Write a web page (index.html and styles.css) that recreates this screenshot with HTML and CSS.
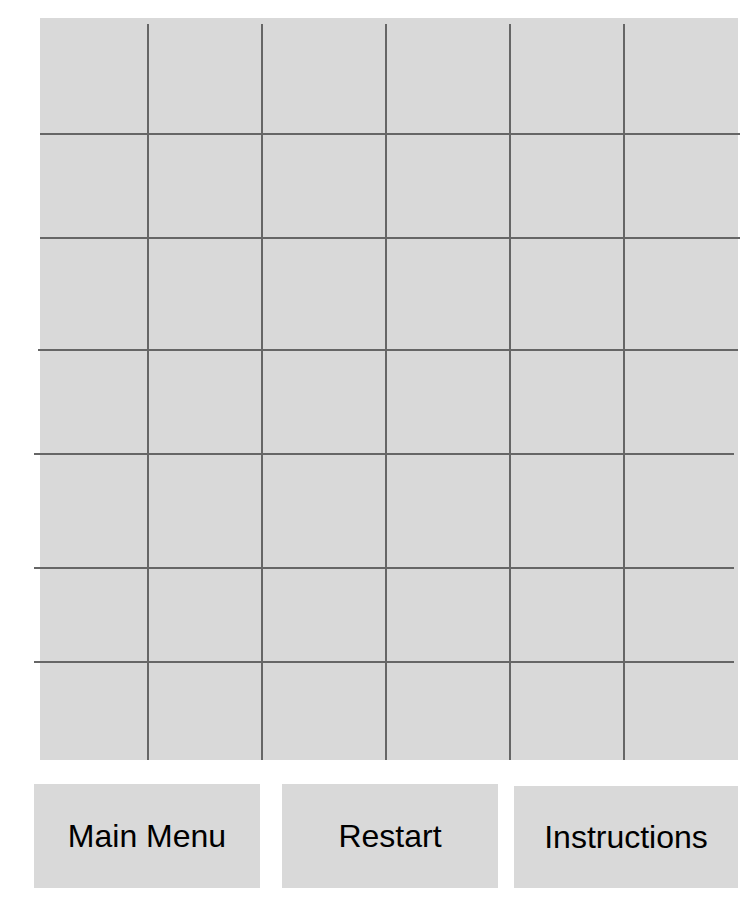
FILE: index.html
```html
<!DOCTYPE html>
<html>
<head>
<meta charset="utf-8">
<title>Board</title>
<link rel="stylesheet" href="styles.css">
</head>
<body>
<div class="board">
  <svg class="board-svg" width="756" height="760" viewBox="0 0 756 760" xmlns="http://www.w3.org/2000/svg">
    <rect x="40" y="18" width="698" height="742" fill="#d9d9d9"/>
    <g fill="#666666">
      <rect x="40" y="133" width="700" height="2"/>
      <rect x="40" y="237" width="700" height="2"/>
      <rect x="38" y="349" width="700" height="2"/>
      <rect x="34" y="453" width="700" height="2"/>
      <rect x="34" y="567" width="700" height="2"/>
      <rect x="34" y="661" width="700" height="2"/>
      <rect x="147" y="24" width="2" height="736"/>
      <rect x="261" y="24" width="2" height="736"/>
      <rect x="385" y="24" width="2" height="736"/>
      <rect x="509" y="24" width="2" height="736"/>
      <rect x="623" y="24" width="2" height="736"/>
    </g>
  </svg>
</div>
<div class="controls">
  <button class="btn btn-menu">Main Menu</button>
  <button class="btn btn-restart">Restart</button>
  <button class="btn btn-help">Instructions</button>
</div>
</body>
</html>
```
FILE: styles.css
```css
html, body {
  margin: 0;
  padding: 0;
  background: #ffffff;
}
body {
  width: 756px;
  height: 900px;
  overflow: hidden;
  font-family: "Liberation Sans", Arial, sans-serif;
}
.board {
  height: 760px;
}
.board-svg {
  display: block;
}
.controls {
  display: flex;
  align-items: flex-end;
  margin-top: 24px;
  padding-left: 34px;
}
.btn {
  border: none;
  margin: 0;
  padding: 0;
  background: #d9d9d9;
  color: #000000;
  font-family: "Liberation Sans", Arial, sans-serif;
  font-size: 32px;
  display: flex;
  align-items: center;
  justify-content: center;
  height: 104px;
}
.btn-menu {
  width: 226px;
}
.btn-restart {
  width: 216px;
  margin-left: 22px;
}
.btn-help {
  width: 224px;
  height: 102px;
  margin-left: 16px;
}
```
